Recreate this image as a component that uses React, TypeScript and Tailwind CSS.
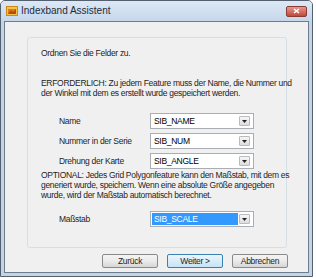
import React from 'react';

const font = { fontFamily: '"Liberation Sans", Arial, sans-serif' };

function Combo({ value, selected }: { value: string; selected?: boolean }) {
  return (
    <div className="w-[104px] h-[16px] border border-[#a9adb4] bg-white flex items-center pl-[1px] pr-[3px]">
      <div
        className={`flex-1 h-[12px] flex items-center pl-[2px] ${selected ? 'bg-[#3399ff] text-white' : 'text-black'}`}
      >
        {value}
      </div>
      <div className="ml-[1px] w-[11px] h-[10px] border border-[#b8bcc2] rounded-[1px] bg-gradient-to-b from-[#f7f7f7] to-[#dcdcdc] flex items-center justify-center">
        <svg width="5" height="3" viewBox="0 0 5 3">
          <path d="M0 0 H5 L2.5 3 Z" fill="#222" />
        </svg>
      </div>
    </div>
  );
}

function Row({ label, value, selected }: { label: string; value: string; selected?: boolean }) {
  return (
    <div className="flex items-center h-[16px]">
      <div className="w-[109px] pl-[18px] whitespace-nowrap text-[#1e1e1e]">{label}</div>
      <Combo value={value} selected={selected} />
    </div>
  );
}

function Btn({ children, primary }: { children: React.ReactNode; primary?: boolean }) {
  return (
    <div
      className={`w-[56px] h-[14px] rounded-[2px] border flex items-center justify-center text-[#1e1e1e] ${
        primary
          ? 'border-[#3c7fb1] bg-gradient-to-b from-[#eaf6fd] to-[#c6e3f5]'
          : 'border-[#8a8a8a] bg-gradient-to-b from-[#f4f4f4] via-[#ebebeb] to-[#d6d6d6]'
      }`}
    >
      {children}
    </div>
  );
}

export default function App() {
  return (
    <div className="w-[316px] h-[278px] bg-white text-[8.5px] leading-[10px] tracking-[-0.3px]" style={font}>
      <div className="w-[313px] h-[277px] flex flex-col rounded-t-[5px] border border-[#55606e] bg-[#c3d4e8] overflow-hidden">
        {/* title bar */}
        <div className="h-[20px] flex items-center px-[5px] bg-gradient-to-b from-[#dde8f5] to-[#c6d7eb]">
          <svg width="12" height="10" viewBox="0 0 12 10" className="mr-[3px]">
            <rect x="0.5" y="0.5" width="11" height="9" fill="#f6c244" stroke="#c98a1a" />
            <rect x="2" y="3" width="8" height="5" fill="#e07a1e" />
            <path d="M2 8 L5 4 L7 6 L10 3 V8 Z" fill="#b84a10" />
          </svg>
          <span className="text-[10px] tracking-normal text-[#1e2a38]">Indexband Assistent</span>
          <div className="ml-auto w-[21px] h-[11px] rounded-[2px] border border-[#8b3a32] bg-gradient-to-b from-[#e29a8e] to-[#c2463a] flex items-center justify-center">
            <svg width="7" height="6" viewBox="0 0 7 6">
              <path d="M1 1 L6 5 M6 1 L1 5" stroke="white" strokeWidth="1.6" />
            </svg>
          </div>
        </div>
        {/* client */}
        <div className="flex-1 mx-[3px] mb-[3px] bg-[#f0f0f0] border border-[#6f7c8c] flex flex-col">
          <div className="ml-[22px] mt-[15px] w-[260px] h-[211px] rounded-[3px] border border-[#d5dfe5] flex flex-col pl-[13px] pt-[10px] text-[#1e1e1e]">
            <div>Ordnen Sie die Felder zu.</div>
            <div className="mt-[20px] whitespace-nowrap">
              ERFORDERLICH: Zu jedem Feature muss der Name, die Nummer und
              <br />
              der Winkel mit dem es erstellt wurde gespeichert werden.
            </div>
            <div className="mt-[15px] flex flex-col gap-[4px]">
              <Row label="Name" value="SIB_NAME" />
              <Row label="Nummer in der Serie" value="SIB_NUM" />
              <Row label="Drehung der Karte" value="SIB_ANGLE" />
            </div>
            <div className="mt-[1px] whitespace-nowrap">
              OPTIONAL: Jedes Grid Polygonfeature kann den Maßstab, mit dem es
              <br />
              generiert wurde, speichern. Wenn eine absolute Größe angegeben
              <br />
              wurde, wird der Maßstab automatisch berechnet.
            </div>
            <div className="mt-[11px]">
              <Row label="Maßstab" value="SIB_SCALE" selected />
            </div>
          </div>
          <div className="mt-[6px] ml-[97px] flex gap-[9px]">
            <Btn>Zurück</Btn>
            <Btn primary>Weiter &gt;</Btn>
            <Btn>Abbrechen</Btn>
          </div>
        </div>
      </div>
    </div>
  );
}
